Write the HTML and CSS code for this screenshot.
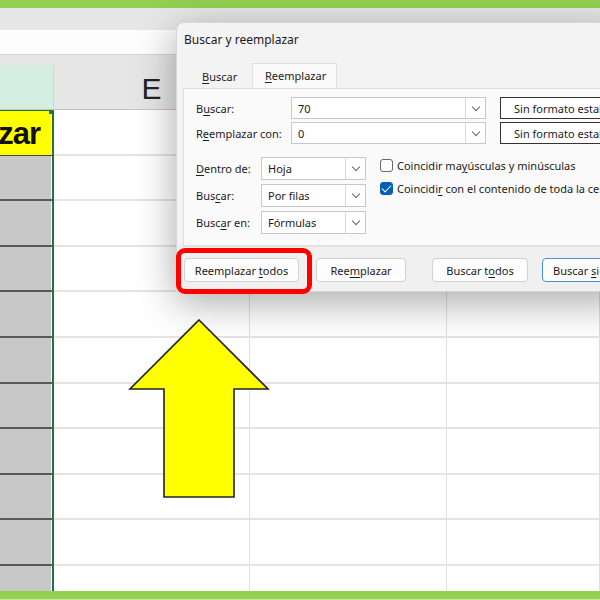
FILE: index.html
```html
<!DOCTYPE html>
<html lang="es">
<head>
  <meta charset="UTF-8">
  <title>Buscar y reemplazar</title>
  <link rel="stylesheet" href="styles.css">
</head>
<body>
  <div class="band"></div>
  <div class="ribbon"></div>
  <div class="formula"></div>
  <div class="gap"></div>

  <div class="sheet">
    <div class="hd hd-sel"></div>
    <div class="hd">E</div>
    <div class="hd"></div>
    <div class="hd"></div>

    <div class="cell sel title"><span>Reemplazar</span></div>
    <div class="cell"></div><div class="cell"></div><div class="cell"></div>
    <div class="cell sel"></div><div class="cell"></div><div class="cell"></div><div class="cell"></div>
    <div class="cell sel"></div><div class="cell"></div><div class="cell"></div><div class="cell"></div>
    <div class="cell sel"></div><div class="cell"></div><div class="cell"></div><div class="cell"></div>
    <div class="cell sel"></div><div class="cell"></div><div class="cell"></div><div class="cell"></div>
    <div class="cell sel"></div><div class="cell"></div><div class="cell"></div><div class="cell"></div>
    <div class="cell sel"></div><div class="cell"></div><div class="cell"></div><div class="cell"></div>
    <div class="cell sel"></div><div class="cell"></div><div class="cell"></div><div class="cell"></div>
    <div class="cell sel"></div><div class="cell"></div><div class="cell"></div><div class="cell"></div>
    <div class="cell sel"></div><div class="cell"></div><div class="cell"></div><div class="cell"></div>
    <div class="cell sel"></div><div class="cell"></div><div class="cell"></div><div class="cell"></div>
  </div>
  <div class="band band-bottom"></div>

  <!-- ventana flotante sobre la hoja -->
  <div class="dialog">
    <div class="dlg-title">Buscar y reemplazar</div>
    <div class="tabs">
      <div class="tab"><u>B</u>uscar</div>
      <div class="tab active"><u>R</u>eemplazar</div>
    </div>
    <div class="panel">
      <div class="find-rows">
        <label>B<u>u</u>scar:</label>
        <div class="combo"><span>70</span><i class="chev"></i></div>
        <div class="fmt">Sin formato establecido</div>
        <label>R<u>e</u>emplazar con:</label>
        <div class="combo"><span>0</span><i class="chev"></i></div>
        <div class="fmt">Sin formato establecido</div>
      </div>
      <div class="opts">
        <div class="opt-grid">
          <label><u>D</u>entro de:</label>
          <div class="combo"><span>Hoja</span><i class="chev"></i></div>
          <label>Bus<u>c</u>ar:</label>
          <div class="combo"><span>Por filas</span><i class="chev"></i></div>
          <label>Busc<u>a</u>r en:</label>
          <div class="combo"><span>Fórmulas</span><i class="chev"></i></div>
        </div>
        <div class="checks">
          <div class="check"><i class="box"></i><span>Coincidir ma<u>y</u>úsculas y minúsculas</span></div>
          <div class="check"><i class="box on"></i><span>Coincidi<u>r</u> con el contenido de toda la celda</span></div>
        </div>
      </div>
    </div>
    <div class="actions">
      <div class="btn hot">Reemplazar <u>t</u>odos</div>
      <div class="btn">Ree<u>m</u>plazar</div>
      <div class="btn wide">Buscar t<u>o</u>dos</div>
      <div class="btn primary">Buscar <u>s</u>iguiente</div>
    </div>
  </div>

  <svg class="arrow" width="144" height="184" viewBox="0 0 144 184">
    <polygon points="71,2 140,71 106,71 106,179 36,179 36,71 2,71" fill="#ffff00" stroke="#222" stroke-width="1.6" stroke-linejoin="miter"/>
  </svg>
</body>
</html>
```

FILE: styles.css
```css
*, *::before, *::after { box-sizing: border-box; margin: 0; padding: 0; }
body {
  width: 600px;
  height: 600px;
  overflow: hidden;
  position: relative;
  background: #e6e6e6;
  font-family: "Noto Sans", "Open Sans", sans-serif;
  color: #1b1b1b;
}
u { text-decoration: underline; text-underline-offset: 2px; }
label { white-space: nowrap; }

.band { height: 8px; background: #92d050; }
.band-bottom { height: 9px; border-bottom: 1px solid #c9e8a8; }
.ribbon { height: 22px; background: #e7e7e7; }
.formula {
  height: 25px;
  background: #fdfdfd;
  border-bottom: 1px solid #d2d2d2;
}
.gap { height: 10px; background: #e6e6e6; }

.sheet {
  height: 526px;
  overflow: hidden;
  display: grid;
  grid-template-columns: 54px 196px 197px 1fr;
  grid-template-rows: 45px;
  grid-auto-rows: 45.6px;
  background: #fff;
}
.hd {
  background: #e6e6e6;
  border-right: 1px solid #d0d0d0;
  border-bottom: 1px solid #c4c4c4;
  font-family: "Liberation Sans", Arial, sans-serif;
  font-size: 30px;
  color: #222;
  display: flex;
  align-items: center;
  justify-content: center;
  padding-top: 4px;
}
.hd-sel { background: #d4efe2; border-right: 1px solid #cfd8d3; }
.cell {
  border-right: 1px solid #dedede;
  border-bottom: 2px solid #e4e4e4;
}
.cell.sel {
  background: #c8c8c8;
  border-right: 2px solid #217346;
  border-bottom: 2px solid #5a5a5a;
  box-shadow: inset -1px 0 0 #fff;
}
.cell.title {
  background: #ffff00;
  border-top: 1px solid #217346;
  border-bottom: 1px solid #444;
  overflow: hidden;
  display: flex;
  justify-content: flex-end;
  align-items: center;
  position: relative;
}
.title span {
  font-family: "Liberation Sans", Arial, sans-serif;
  font-weight: bold;
  font-size: 31px;
  letter-spacing: -1px;
  color: #111;
  white-space: nowrap;
  padding-right: 12px;
  padding-top: 2px;
}
.title::after {
  content: "";
  position: absolute;
  right: -2px;
  top: -2px;
  width: 5px;
  height: 5px;
  background: #217346;
}

.dialog {
  position: absolute;
  left: 176px;
  top: 22px;
  width: 450px;
  background: #f3f3f3;
  border: 1px solid #d6d6d6;
  border-radius: 8px 0 0 0;
  box-shadow: 0 10px 40px rgba(0, 0, 0, .35);
  font-size: 11px;
}
.dlg-title {
  height: 34px;
  padding: 8px 0 0 7px;
  font-size: 12px;
  color: #1a1a1a;
}
.tabs {
  display: flex;
  gap: 2px;
  padding: 6px 0 0 8px;
}
.tab {
  width: 65px;
  height: 25px;
  padding: 6px 0 0 17px;
  color: #222;
}
.tab.active {
  width: 85px;
  padding-left: 12px;
  padding-top: 4px;
  background: #fafafa;
  border: 1px solid #e0e0e0;
  border-bottom: none;
  margin-bottom: -1px;
  position: relative;
}
.panel {
  margin-left: 6px;
  height: 158px;
  background: #fafafa;
  border: 1px solid #e0e0e0;
  border-right: none;
  padding: 8px 0 0 12px;
}
.find-rows {
  display: grid;
  grid-template-columns: 81px 195px 150px;
  column-gap: 14px;
  row-gap: 3px;
  align-items: center;
}
.combo {
  height: 22px;
  background: #fff;
  border: 1px solid #c8c8c8;
  display: flex;
  align-items: center;
  padding-left: 6px;
  position: relative;
}
.combo span { flex: 1; }
.chev {
  width: 20px;
  height: 100%;
  border-left: 1px solid #d8d8d8;
  position: relative;
}
.chev::after {
  content: "";
  position: absolute;
  left: 7px;
  top: 6px;
  width: 6px;
  height: 6px;
  border-right: 1px solid #666;
  border-bottom: 1px solid #666;
  transform: rotate(45deg);
}
.fmt {
  height: 22px;
  background: #fff;
  border: 1px solid #333;
  padding: 3px 0 0 13px;
  white-space: nowrap;
}
.opts {
  display: flex;
  gap: 14px;
  margin-top: 13px;
}
.opt-grid {
  display: grid;
  grid-template-columns: 65px 105px;
  row-gap: 4px;
  align-items: center;
}
.opt-grid .combo { height: 23px; }
.checks {
  display: flex;
  flex-direction: column;
  gap: 8px;
  padding-top: 1px;
}
.check {
  display: flex;
  align-items: center;
  gap: 4px;
  white-space: nowrap;
}
.box {
  flex-shrink: 0;
  width: 13px;
  height: 13px;
  border: 1px solid #666;
  border-radius: 3px;
  background: #fff;
  position: relative;
}
.box.on { background: #005fb8; border-color: #005fb8; }
.box.on::after {
  content: "";
  position: absolute;
  left: 3px;
  top: 0;
  width: 5px;
  height: 9px;
  border-right: 1.5px solid #fff;
  border-bottom: 1.5px solid #fff;
  transform: rotate(45deg);
}
.actions {
  height: 45px;
  border-top: 1px solid #e6e6e6;
  background: #f0f0f0;
  display: flex;
  gap: 17px;
  padding: 11px 0 0 7px;
}
.btn {
  flex-shrink: 0;
  height: 24px;
  width: 115px;
  background: #fdfdfd;
  border: 1px solid #d2d2d2;
  border-radius: 4px;
  text-align: center;
  padding-top: 4px;
  white-space: nowrap;
  position: relative;
}
.btn:nth-child(2) { width: 90px; }
.btn.wide { width: 96px; margin-left: 9px; }
.btn.primary {
  width: 120px;
  margin-left: -3px;
  border: 1px solid #4a90d9;
  text-align: left;
  padding-left: 10px;
}
.btn.hot::after {
  content: "";
  position: absolute;
  left: -9px;
  top: -11px;
  width: 136px;
  height: 46px;
  border: 5px solid #ff0000;
  border-radius: 9px;
}

.arrow {
  position: absolute;
  left: 128px;
  top: 318px;
}
```
